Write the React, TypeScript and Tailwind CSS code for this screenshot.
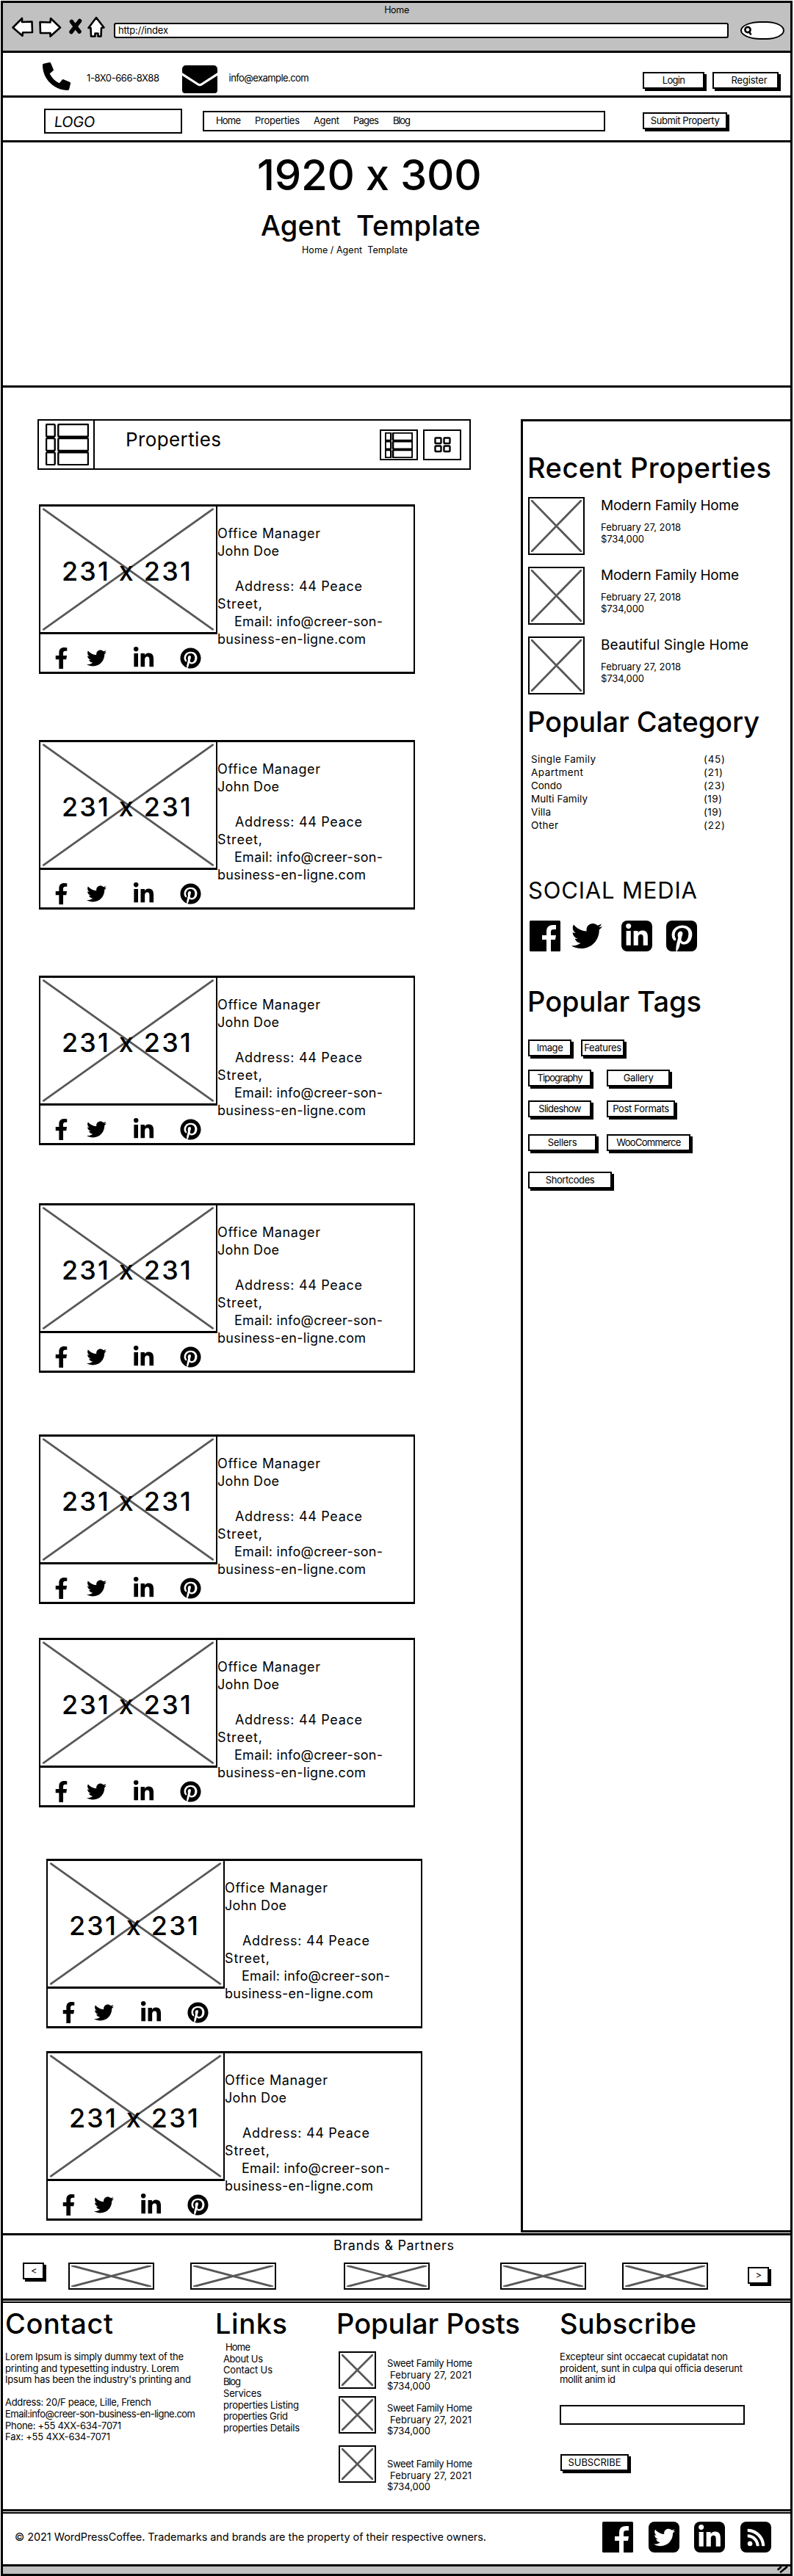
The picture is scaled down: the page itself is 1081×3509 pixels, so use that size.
import { useLayoutEffect, useRef } from "react";
import type { ReactNode } from "react";
import {
  FaFacebookF,
  FaLinkedinIn,
  FaPhoneAlt,
  FaPinterest,
  FaPinterestP,
  FaTwitter,
  FaRss,
} from "react-icons/fa";

/** One line of text whose tracking is adjusted so it spans `w` pixels. */
function T({ w, className = "", children }: { w: number; className?: string; children: string }) {
  const ref = useRef<HTMLSpanElement>(null);
  useLayoutEffect(() => {
    const el = ref.current;
    if (!el) return;
    el.style.letterSpacing = "0px";
    const natural = el.getBoundingClientRect().width;
    const gaps = Math.max(1, children.length - 1);
    el.style.letterSpacing = `${(w - natural) / gaps}px`;
  }, [w, children]);
  return (
    <div className={className}>
      <span ref={ref} className="inline-block whitespace-pre">
        {children}
      </span>
    </div>
  );
}

function Heading({ w, className = "", children }: { w: number; className?: string; children: string }) {
  return (
    <T w={w} className={`h-10 text-[38px] font-medium leading-[40px] ${className}`}>
      {children}
    </T>
  );
}

function Btn({ w, className, children }: { w: number; className: string; children: string }) {
  return (
    <div
      className={`flex h-[23px] shrink-0 items-center justify-center border-2 border-black bg-white text-[13px] leading-none shadow-[3px_3px_0_#000] ${className}`}
    >
      <T w={w}>{children}</T>
    </div>
  );
}

function Placeholder({ className, children }: { className: string; children?: ReactNode }) {
  return (
    <div className={`relative shrink-0 border-black bg-white ${className}`}>
      <svg className="absolute inset-[2px] h-[calc(100%-4px)] w-[calc(100%-4px)]" viewBox="0 0 100 100" preserveAspectRatio="none">
        <path
          d="M1 1L99 99M99 1L1 99"
          stroke="#585858"
          strokeWidth="2.8"
          strokeLinecap="round"
          vectorEffect="non-scaling-stroke"
        />
      </svg>
      {children}
    </div>
  );
}

function FacebookTile() {
  return (
    <svg className="size-[42px] shrink-0" viewBox="0 0 42 42">
      <rect width="42" height="42" rx="1.5" />
      <path
        fill="#fff"
        d="M23 42V26h-6v-6h6v-5c0-6 3.500-9 9-9h4v6h-3c-3 0-4 1-4 3.500V20h7l-1 6h-6v16z"
      />
    </svg>
  );
}

function Tile({ children }: { children: ReactNode }) {
  return (
    <div className="flex size-[42px] shrink-0 items-center justify-center overflow-hidden rounded-[8px] bg-black text-white">
      {children}
    </div>
  );
}

function Toolbar() {
  return (
    <header className="relative flex h-[71px] items-start border-y-[3px] border-black bg-[#c1c1c1]">
      <svg className="ml-[12px] mt-[17px] h-[34px] w-[130px]" viewBox="16 21 130 34" fill="#fff" stroke="#000" strokeWidth="2.6" strokeLinejoin="round">
        <path d="M17.500 37.500L30 25v5l13.500-.5.500 14.500-13 .3-.5 4.500z" />
        <path d="M54.500 30l14 .5.500-5.500L82 37.500 68.500 49.500v-4.500L55 45z" />
        <path d="M97.500 29.500L108 43M108.500 28.500L97 43.500" strokeWidth="5.500" strokeLinecap="round" />
        <path d="M131 24l10.500 13.500-3.500.5-.5 11.500h-4v-4h-4v4h-5.500L123.500 38h-3z" />
      </svg>
      <div className="ml-[9px] mt-[27px] flex h-[21px] w-[837px] items-center rounded-[3px] border-2 border-black bg-white pl-[4px] text-[13px] leading-none">
        <T w={68}>http://index</T>
      </div>
      <div className="ml-[16px] mt-[25px] h-[25px] w-[60px] rounded-[50%_45%_45%_50%/55%] border-2 border-black bg-white">
        <svg className="ml-[1px] mt-[3px] h-[16px] w-[14px]" viewBox="0 0 14 16" fill="none" stroke="#000" strokeWidth="2.600">
          <circle cx="7" cy="6.500" r="3.600" />
          <path d="M9 9.500L11 12.500" strokeLinecap="round" />
        </svg>
      </div>
      <div className="absolute left-0 right-0 top-[1px] flex justify-center text-[12.500px] leading-[17px]">
        <T w={34}>Home</T>
      </div>
    </header>
  );
}

function TopRows() {
  return (
    <>
      <div className="flex h-[61px] border-b-[3px] border-black">
        <FaPhoneAlt className="ml-[54px] mt-[13px] size-[38px]" />
        <T w={99} className="ml-[22px] mt-[26px] text-[13px] leading-[17px]">1-8X0-666-8X88</T>
        <svg className="ml-[31px] mt-[17px] h-[38px] w-[48px]" viewBox="0 0 48 38">
          <path d="M0 10V5a5 5 0 0 1 5-5h38a5 5 0 0 1 5 5v5L26.500 24q-2.500 1.800-5 0z" />
          <path d="M0 14l20.500 13q3.500 2.500 7 0L48 14v20a4 4 0 0 1-4 4H4a4 4 0 0 1-4-4z" />
        </svg>
        <T w={109} className="ml-[16px] mt-[26px] text-[13px] leading-[17px]">info@example.com</T>
        <div className="ml-auto mr-[16px] mt-[26px] flex gap-[11px]">
          <Btn w={31} className="w-[84px]">Login</Btn>
          <Btn w={49} className="w-[90px] pl-[10px]">Register</Btn>
        </div>
      </div>
      <nav className="flex h-[61px] border-b-[3px] border-black">
        <div className="ml-[56px] mt-[15px] h-[34px] w-[188px] border-2 border-black pl-[12px] text-[20px] leading-[33px]">
          <T w={59} className="-skew-x-6">LOGO</T>
        </div>
        <div className="ml-[28px] mt-[18px] flex h-[28px] w-[548px] gap-[19px] border-[2.500px] border-black pl-[16px] text-[13px] leading-[23px]">
          <T w={34} className="w-[34px]">Home</T>
          <T w={61} className="w-[61px]">Properties</T>
          <T w={35} className="w-[35px]">Agent</T>
          <T w={35} className="w-[35px]">Pages</T>
          <T w={24} className="w-[24px]">Blog</T>
        </div>
        <Btn w={94} className="ml-[51px] mt-[20px] w-[115px]">Submit Property</Btn>
      </nav>
    </>
  );
}

function Hero() {
  return (
    <section className="flow-root h-[334px] border-b-[3px] border-black">
      <T w={312} className="ml-[346px] mt-[14px] text-[58px] font-medium leading-[60px]">1920 x 300</T>
      <T w={299} className="ml-[351px] mt-[19px] text-[38px] font-medium leading-[40px]">Agent  Template</T>
      <T w={144} className="ml-[407px] mt-[5px] text-[12.500px] leading-[18px]">Home / Agent  Template</T>
    </section>
  );
}

function ListGlyph({ className }: { className: string }) {
  return (
    <svg className={className} viewBox="0 0 58 56" preserveAspectRatio="none" fill="#fff" stroke="#000" strokeWidth="2.400">
      {[0, 1, 2].map((i) => (
        <g key={i}>
          <rect x="1" y={1 + i * 18.800} width="11.500" height="16.500" rx="1.500" vectorEffect="non-scaling-stroke" />
          <rect x="17" y={1 + i * 18.800} width="40" height="16.500" rx="1" vectorEffect="non-scaling-stroke" />
        </g>
      ))}
    </svg>
  );
}

function PropertiesBar() {
  return (
    <div className="ml-[47px] mt-[43px] flex h-[69px] w-[590px] border-[2.500px] border-black">
      <div className="flex w-[76px] items-center border-r-2 border-black pl-[9px]">
        <ListGlyph className="h-[57px] w-[59px]" />
      </div>
      <T w={130} className="ml-[42px] mt-[9px] text-[26px] leading-[34px]">Properties</T>
      <div className="ml-auto mr-[11px] mt-[12px] flex gap-[7px]">
        <div className="flex h-[42px] w-[52px] items-center justify-center border-2 border-black">
          <ListGlyph className="h-[35px] w-[38px]" />
        </div>
        <div className="flex h-[42px] w-[52px] items-center justify-center border-2 border-black">
          <svg className="h-[22px] w-[23px]" viewBox="0 0 23 22" fill="none" stroke="#000" strokeWidth="2.400">
            <rect x="1.500" y="1.500" width="8" height="7.500" rx="1" />
            <rect x="13.500" y="1.500" width="8" height="7.500" rx="1" />
            <rect x="1.500" y="12.500" width="8" height="7.500" rx="1" />
            <rect x="13.500" y="12.500" width="8" height="7.500" rx="1" />
          </svg>
        </div>
      </div>
    </div>
  );
}

const cardOffsets = [
  "ml-[49px] mt-[47px]",
  "ml-[49px] mt-[90px]",
  "ml-[49px] mt-[90px]",
  "ml-[49px] mt-[79px]",
  "ml-[49px] mt-[84px]",
  "ml-[49px] mt-[46px]",
  "ml-[59px] mt-[70px]",
  "ml-[59px] mt-[31px]",
];

function AgentCard({ offset }: { offset: string }) {
  return (
    <article className={`flex h-[231px] w-[512px] border-y-[3px] border-x-2 border-black ${offset}`}>
      <div className="-ml-[2px] -mt-[3px] w-[243px] shrink-0">
        <Placeholder className="h-[177px] border-x-2 border-y-[3px]">
          <div className="relative flex h-full items-center justify-center pr-[3px] pt-[5px] text-[36px] font-medium leading-none">
            <T w={180}>231 x 231</T>
          </div>
        </Placeholder>
        <div className="flex h-[52px] items-center pt-[12px]">
          <FaFacebookF className="ml-[21px] h-[29px] w-[19px]" />
          <FaTwitter className="ml-[25px] size-[27px]" />
          <FaLinkedinIn className="ml-[35px] size-[31px]" />
          <FaPinterest className="ml-[34px] size-[29px]" />
        </div>
      </div>
      <div className="mt-[25px] text-[18px] leading-[24px]">
        <T w={140}>Office Manager</T>
        <T w={84}>John Doe</T>
        <T w={173} className="ml-[24px] mt-[24px]">Address: 44 Peace</T>
        <T w={61}>Street,</T>
        <T w={202} className="ml-[23px]">Email: info@creer-son-</T>
        <T w={202}>business-en-ligne.com</T>
      </div>
    </article>
  );
}

const recent = [
  { title: "Modern Family Home", w: 188 },
  { title: "Modern Family Home", w: 188 },
  { title: "Beautiful Single Home", w: 201 },
];

const categories = [
  { name: "Single Family", w: 88, count: "(45)", cw: 29 },
  { name: "Apartment", w: 71, count: "(21)", cw: 26 },
  { name: "Condo", w: 42, count: "(23)", cw: 29 },
  { name: "Multi Family", w: 77, count: "(19)", cw: 25 },
  { name: "Villa", w: 27, count: "(19)", cw: 25 },
  { name: "Other", w: 37, count: "(22)", cw: 29 },
];

function Sidebar() {
  return (
    <aside className="ml-auto mt-[43px] h-[2470px] w-[367px] border-b-[3px] border-l-[3px] border-t-[3px] border-black pl-[8px]">
      <Heading w={332} className="-ml-[2px] mt-[43px]">Recent Properties</Heading>
      <div className="mt-[20px] flex flex-col gap-[16px]">
        {recent.map((item, i) => (
          <div key={i} className="flex h-[79px]">
            <Placeholder className="-ml-px h-[79px] w-[77px] border-[2.500px]" />
            <div className="ml-[22px] text-[13px] leading-[16px]">
              <T w={item.w} className="text-[19px] leading-[24px]">{item.title}</T>
              <T w={109} className="mt-[9px]">February 27, 2018</T>
              <T w={59}>$734,000</T>
            </div>
          </div>
        ))}
      </div>
      <Heading w={316} className="-ml-[2px] mt-[17px]">Popular Category</Heading>
      <div className="ml-[3px] mt-[22px] text-[13.500px] leading-[18px]">
        {categories.map((c) => (
          <div key={c.name} className="flex">
            <T w={c.w} className="w-[235px]">{c.name}</T>
            <T w={c.cw}>{c.count}</T>
          </div>
        ))}
      </div>
      <T w={230} className="-ml-px mt-[60px] text-[31px] leading-[40px]">SOCIAL MEDIA</T>
      <div className="ml-[1px] mt-[21px] flex h-[42px] items-center">
        <FacebookTile />
        <FaTwitter className="ml-[15px] mr-[26px] size-[42px]" />
        <Tile>
          <FaLinkedinIn className="size-[34px]" />
        </Tile>
        <div className="ml-[19px]">
          <Tile>
            <FaPinterestP className="mt-[7px] size-[37px]" />
          </Tile>
        </div>
      </div>
      <Heading w={237} className="-ml-[2px] mt-[48px]">Popular Tags</Heading>
      <div className="-ml-px mt-[32px] flex gap-[13px]">
        <Btn w={36} className="w-[59px]">Image</Btn>
        <Btn w={51} className="w-[59px]">Features</Btn>
      </div>
      <div className="-ml-px mt-[18px] flex gap-[21px]">
        <Btn w={62} className="w-[86px]">Tipography</Btn>
        <Btn w={41} className="w-[86px]">Gallery</Btn>
      </div>
      <div className="-ml-px mt-[19px] flex gap-[21px]">
        <Btn w={58} className="w-[86px]">Slideshow</Btn>
        <Btn w={77} className="w-[93px]">Post Formats</Btn>
      </div>
      <div className="-ml-px mt-[23px] flex gap-[14px]">
        <Btn w={40} className="w-[93px]">Sellers</Btn>
        <Btn w={88} className="w-[114px]">WooCommerce</Btn>
      </div>
      <div className="-ml-px mt-[28px] flex">
        <Btn w={67} className="w-[114px]">Shortcodes</Btn>
      </div>
    </aside>
  );
}

function Brands() {
  return (
    <section className="h-[89px] border-b-[3px] border-black">
      <T w={164} className="ml-[450px] pt-[2px] text-[18px] leading-[24px]">Brands &amp; Partners</T>
      <div className="ml-[27px] mt-[11px] flex items-start">
        <Btn w={7} className="mr-[33px] w-[29px]">{"<"}</Btn>
        <Placeholder className="mr-[49px] h-[37px] w-[117px] border-[2.500px]" />
        <Placeholder className="mr-[92px] h-[37px] w-[117px] border-[2.500px]" />
        <Placeholder className="mr-[96px] h-[37px] w-[117px] border-[2.500px]" />
        <Placeholder className="mr-[49px] h-[37px] w-[117px] border-[2.500px]" />
        <Placeholder className="mr-[54px] h-[37px] w-[117px] border-[2.500px]" />
        <Btn w={8} className="mt-[6px] w-[29px]">{">"}</Btn>
      </div>
    </section>
  );
}

const links = [
  { text: "About Us", w: 54 },
  { text: "Contact Us", w: 67 },
  { text: "Blog", w: 24 },
  { text: "Services", w: 52 },
  { text: "properties Listing", w: 103 },
  { text: "properties Grid", w: 88 },
  { text: "properties Details", w: 104 },
];

const posts = [
  { row: "mt-[18px]", text: "mt-[9px]" },
  { row: "mt-[10px]", text: "mt-[9px]" },
  { row: "mt-[16px]", text: "mt-[18px]" },
];

function Footer() {
  return (
    <footer className="mt-px flex h-[286px] border-b-[3px] border-t-2 border-black pt-[8px] text-[13px] leading-[15.700px]">
      <div className="w-[292px] pl-[3px]">
        <Heading w={147}>Contact</Heading>
        <T w={243} className="mt-[18px]">Lorem Ipsum is simply dummy text of the</T>
        <T w={237}>printing and typesetting industry. Lorem</T>
        <T w={253}>Ipsum has been the industry's printing and</T>
        <T w={199} className="mt-[15px]">Address: 20/F peace, Lille, French</T>
        <T w={259}>Email:info@creer-son-business-en-ligne.com</T>
        <T w={158}>Phone: +55 4XX-634-7071</T>
        <T w={143}>Fax: +55 4XX-634-7071</T>
      </div>
      <div className="w-[165px]">
        <Heading w={98} className="-ml-[3px]">Links</Heading>
        <T w={34} className="ml-[11px] mt-[5px]">Home</T>
        <div className="ml-[8px]">
          {links.map((l) => (
            <T key={l.text} w={l.w}>{l.text}</T>
          ))}
        </div>
      </div>
      <div className="w-[300px]">
        <Heading w={250} className="-ml-[3px]">Popular Posts</Heading>
        {posts.map((p, i) => (
          <div key={i} className={`flex h-[51px] ${p.row}`}>
            <Placeholder className="h-[51px] w-[51px] border-[2.500px]" />
            <div className={`ml-[15px] ${p.text}`}>
              <T w={116}>Sweet Family Home</T>
              <T w={111} className="ml-[4px]">February 27, 2021</T>
              <T w={59}>$734,000</T>
            </div>
          </div>
        ))}
      </div>
      <div className="pl-px">
        <Heading w={186}>Subscribe</Heading>
        <T w={229} className="mt-[18px]">Excepteur sint occaecat cupidatat non</T>
        <T w={249}>proident, sunt in culpa qui officia deserunt</T>
        <T w={76}>mollit anim id</T>
        <div className="mt-[26px] h-[27px] w-[252px] border-[2.500px] border-black" />
        <Btn w={72} className="ml-px mt-[40px] w-[93px]">SUBSCRIBE</Btn>
      </div>
    </footer>
  );
}

function Copyright() {
  return (
    <div className="mt-px flex h-[74px] border-b-[3px] border-t-2 border-black">
      <T w={642} className="ml-[16px] mt-[21px] text-[14.500px] leading-[22px]">
        © 2021 WordPressCoffee. Trademarks and brands are the property of their respective owners.
      </T>
      <div className="ml-auto mr-[26px] mt-[11px] flex">
        <FacebookTile />
        <div className="ml-[21px]">
          <Tile>
            <FaTwitter className="size-[29px]" />
          </Tile>
        </div>
        <div className="ml-[20px]">
          <Tile>
            <FaLinkedinIn className="size-[34px]" />
          </Tile>
        </div>
        <div className="ml-[21px]">
          <Tile>
            <FaRss className="size-[27px]" />
          </Tile>
        </div>
      </div>
    </div>
  );
}

export default function App() {
  return (
    <div className="w-[1081px] bg-white pt-px font-['Inter',sans-serif] text-black">
      <div className="ml-px mr-[2px] border-x-[3px] border-black">
        <Toolbar />
        <TopRows />
        <Hero />
        <main className="flex h-[2517px] border-b-[3px] border-black">
          <div>
            <PropertiesBar />
            {cardOffsets.map((offset, i) => (
              <AgentCard key={i} offset={offset} />
            ))}
          </div>
          <Sidebar />
        </main>
        <Brands />
        <Footer />
        <Copyright />
        <div className="flex h-[13px] justify-end border-b-[3px] border-black bg-[#c1c1c1]">
          <svg className="mr-[2px] h-[10px] w-[16px]" viewBox="0 0 16 10" stroke="#000" strokeWidth="2.600" strokeLinecap="round">
            <path d="M1.500 4L5 1M5 7.500L13 1" />
          </svg>
        </div>
      </div>
    </div>
  );
}
